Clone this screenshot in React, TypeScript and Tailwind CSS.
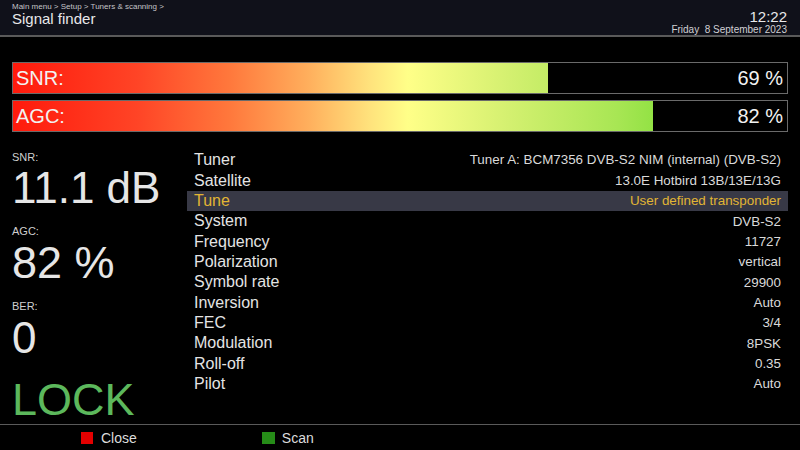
const bars = [
  { label: 'SNR:', value: '69 %', fill: 'w-[535px]' },
  { label: 'AGC:', value: '82 %', fill: 'w-[640px]' },
];

const rows = [
  { label: 'Tuner', value: 'Tuner A: BCM7356 DVB-S2 NIM (internal) (DVB-S2)' },
  { label: 'Satellite', value: '13.0E Hotbird 13B/13E/13G' },
  { label: 'Tune', value: 'User defined transponder', selected: true },
  { label: 'System', value: 'DVB-S2' },
  { label: 'Frequency', value: '11727' },
  { label: 'Polarization', value: 'vertical' },
  { label: 'Symbol rate', value: '29900' },
  { label: 'Inversion', value: 'Auto' },
  { label: 'FEC', value: '3/4' },
  { label: 'Modulation', value: '8PSK' },
  { label: 'Roll-off', value: '0.35' },
  { label: 'Pilot', value: 'Auto' },
];

export default function App() {
  return (
    <div className="w-[800px] h-[450px] bg-black flex flex-col overflow-hidden font-['Liberation_Sans',Arial,sans-serif] text-[#e6e6e6]">
      {/* Header */}
      <div className="h-[37px] shrink-0 bg-[#10111a] border-b-2 border-[#5a5a5a] flex justify-between pl-[12px] pr-[13px]">
        <div>
          <div className="mt-[3px] text-[8px] leading-none text-[#c4c4c8]">Main menu &gt; Setup &gt; Tuners &amp; scanning &gt;</div>
          <div className="text-[15px] leading-none text-[#e8e8ea]">Signal finder</div>
        </div>
        <div className="flex flex-col items-end">
          <div className="mt-[10px] text-[15px] leading-[14px] text-[#e8e8ea]">12:22</div>
          <div className="mt-[1px] text-[10px] leading-none text-[#d0d0d4] whitespace-pre">Friday  8 September 2023</div>
        </div>
      </div>

      {/* Bars */}
      <div className="mt-[25px] px-[12px] flex flex-col gap-[6px]">
        {bars.map((bar) => (
          <div key={bar.label} className="relative h-[32px] border border-[#6a6a6a] bg-black">
            <div className={`h-full overflow-hidden ${bar.fill}`}>
              <div className="w-[774px] h-full bg-[linear-gradient(to_right,#ff1a0c_0%,#ff4426_16%,#ff783c_28%,#ffae5c_38%,#ffe27c_46%,#ffff88_51%,#d4f070_64%,#a8e654_78%,#6ada26_92%,#5cd81c_100%)]" />
            </div>
            <div className="absolute inset-0 flex items-center justify-between pl-[3px] pr-[4px] text-[20px] leading-none text-[#f2f2f2]">
              <span>{bar.label}</span>
              <span>{bar.value}</span>
            </div>
          </div>
        ))}
      </div>

      {/* Main */}
      <div className="mt-[18px] flex flex-1 min-h-0">
        <div className="w-[187px] shrink-0 pl-[12px] flex flex-col">
          <div className="mt-[2px] text-[11px] leading-none text-[#cfcfcf]">SNR:</div>
          <div className="mt-[3px] text-[44px] leading-none">11.1 dB</div>
          <div className="mt-[16px] text-[11px] leading-none text-[#cfcfcf]">AGC:</div>
          <div className="mt-[3px] text-[45px] leading-none">82 %</div>
          <div className="mt-[16px] text-[11px] leading-none text-[#cfcfcf]">BER:</div>
          <div className="mt-[4px] text-[44px] leading-none">0</div>
          <div className="mt-[17px] text-[45px] leading-none text-[#5cb85c]">LOCK</div>
        </div>
        <div className="flex-1 mr-[12px]">
          {rows.map((row) => (
            <div
              key={row.label}
              className={`h-[20.36px] flex items-center justify-between pl-[7px] pr-[7px] ${
                row.selected ? 'bg-[#383946] text-[#e2b534]' : ''
              }`}
            >
              <span className={`text-[16px] leading-none ${row.selected ? '' : 'text-[#e4e4e4]'}`}>{row.label}</span>
              <span className={`text-[13.4px] leading-none ${row.selected ? '' : 'text-[#dadada]'}`}>{row.value}</span>
            </div>
          ))}
        </div>
      </div>

      {/* Footer */}
      <div className="h-[26px] shrink-0 border-t border-[#5a5a5a] flex items-center text-[14px] leading-none text-[#dcdcdc]">
        <div className="ml-[81px] flex items-center gap-[8px]">
          <span className="w-[12px] h-[12px] bg-[#e40000]" />
          <span>Close</span>
        </div>
        <div className="ml-[125px] flex items-center gap-[7px]">
          <span className="w-[13px] h-[12px] bg-[#268c18]" />
          <span>Scan</span>
        </div>
      </div>
    </div>
  );
}
